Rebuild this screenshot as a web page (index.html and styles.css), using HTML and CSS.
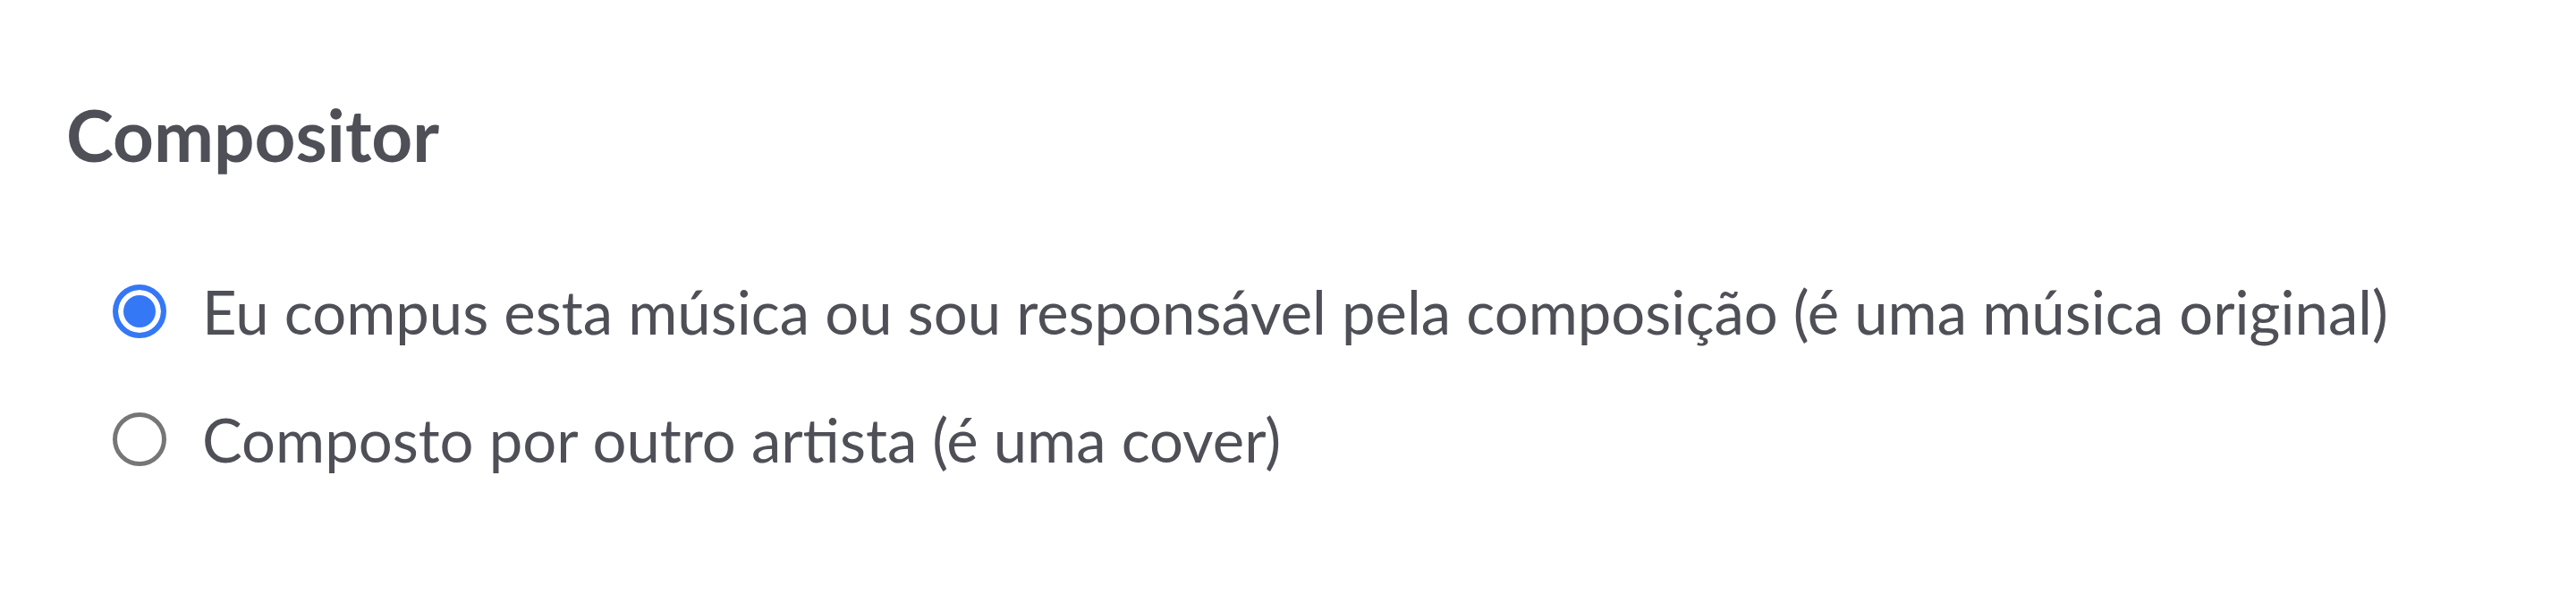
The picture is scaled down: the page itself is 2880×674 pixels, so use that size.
FILE: index.html
```html
<!DOCTYPE html>
<html lang="pt">
<head>
<meta charset="utf-8">
<title>Compositor</title>
<link rel="stylesheet" href="styles.css">
</head>
<body>
<section class="field">
  <h2 class="field-title">Compositor</h2>
  <div class="options">
    <label class="option">
      <input class="radio" type="radio" name="composer" checked>
      <span class="option-text">Eu compus esta música ou sou responsável pela composição (é uma música original)</span>
    </label>
    <label class="option">
      <input class="radio" type="radio" name="composer">
      <span class="option-text">Composto por outro artista (é uma cover)</span>
    </label>
  </div>
</section>
</body>
</html>
```

FILE: styles.css
```css
html, body {
  margin: 0;
  padding: 0;
  background: #ffffff;
}

body {
  min-height: 100vh;
  font-family: Lato, "Open Sans", sans-serif;
  color: #4f4f57;
}

.field {
  padding: 100px 74px 0 74px;
}

.field-title {
  margin: 0;
  font-size: 80px;
  font-weight: 700;
  line-height: 100px;
}

.options {
  display: flex;
  flex-direction: column;
  gap: 83px;
  margin-top: 118px;
  padding-left: 52px;
}

.option {
  display: flex;
  align-items: center;
  gap: 40px;
  height: 60px;
}

.radio {
  appearance: none;
  -webkit-appearance: none;
  margin: 0;
  flex: none;
  width: 60px;
  height: 60px;
  border-radius: 50%;
  border: 5px solid #767676;
  background: #ffffff;
  box-sizing: border-box;
}

.radio:checked {
  border: 6px solid #3478f6;
  box-shadow: inset 0 0 0 6px #ffffff;
  background: #3478f6;
}

.option-text {
  font-size: 67px;
  line-height: 60px;
}
```
